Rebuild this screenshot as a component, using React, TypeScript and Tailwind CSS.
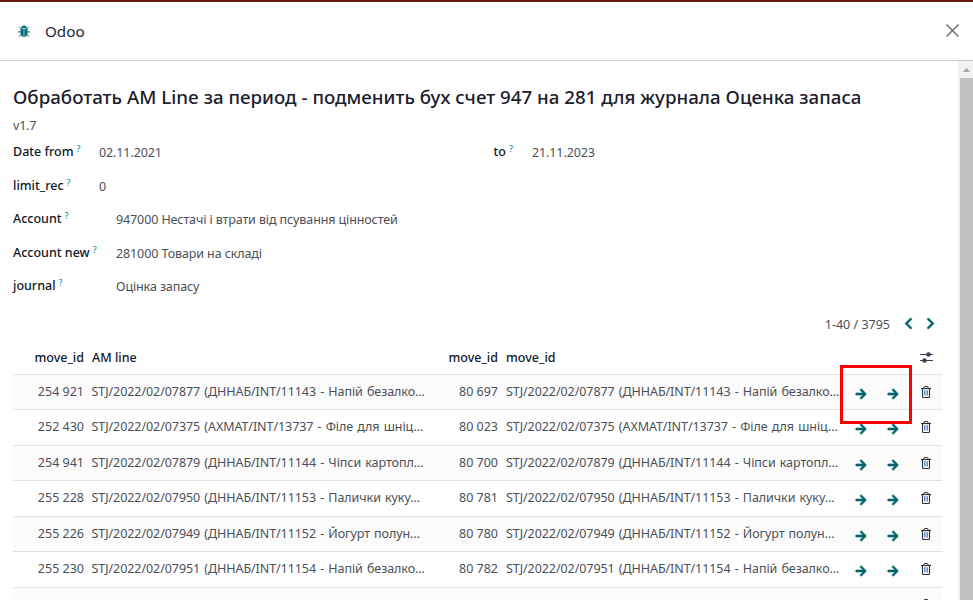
import { FaArrowRight, FaChevronLeft, FaChevronRight } from "react-icons/fa";

type Line = { id: string; line: string; move: string };

const lines: Line[] = [
  { id: "254 921", line: "STJ/2022/02/07877 (ДННАБ/INT/11143 - Напій безалко...", move: "80 697" },
  { id: "252 430", line: "STJ/2022/02/07375 (АХМАТ/INT/13737 - Філе для шніц...", move: "80 023" },
  { id: "254 941", line: "STJ/2022/02/07879 (ДННАБ/INT/11144 - Чіпси картопл...", move: "80 700" },
  { id: "255 228", line: "STJ/2022/02/07950 (ДННАБ/INT/11153 - Палички куку...", move: "80 781" },
  { id: "255 226", line: "STJ/2022/02/07949 (ДННАБ/INT/11152 - Йогурт полун...", move: "80 780" },
  { id: "255 230", line: "STJ/2022/02/07951 (ДННАБ/INT/11154 - Напій безалко...", move: "80 782" },
];

const rowHeights = ["h-[35px]", "h-[36px]"];

function BugIcon() {
  return (
    <svg width="12" height="13" viewBox="0 0 12 13" className="text-[#017075]">
      <path d="M3.200 3a2.800 2.600 0 0 1 5.600 0z" fill="currentColor" />
      <path d="M2.500 3.500h3.200V11.900C3.800 11.700 2.500 10.400 2.500 8zM6.300 3.500H9.500V8c0 2.400-1.300 3.700-3.200 3.900z" fill="currentColor" />
      <path d="M1.200 2 3.300 4M10.800 2 8.700 4M0 6.900h3M12 6.900H9M1.200 11.600 3.300 9.300M10.800 11.600 8.700 9.300" stroke="currentColor" strokeWidth="1" fill="none" />
    </svg>
  );
}

function TrashIcon() {
  return (
    <svg width="10" height="12" viewBox="0 0 10 12" fill="none" stroke="#2b303c">
      <path d="M0 2.500h10" strokeWidth="1.200" />
      <path d="M3 2.500V1.200Q3 .5 3.700.5h2.600Q7 .5 7 1.200v1.300" />
      <path d="M1.500 2.500v7.800q0 1.200 1 1.200h5q1 0 1-1.200V2.500" strokeWidth="1.100" />
      <path d="M3.500 4.200v5.300M5 4.200v5.300M6.500 4.200v5.300" strokeWidth="0.9" stroke="#557eae" />
    </svg>
  );
}

function AdjustIcon() {
  return (
    <svg width="13" height="11" viewBox="0 0 13 11" fill="#374151">
      <path d="M0 2h13v1H0zM0 8h13v1H0z" />
      <circle cx="8.500" cy="2.500" r="2.300" />
      <circle cx="4.500" cy="8.500" r="2.300" />
    </svg>
  );
}

function Label({ children }: { children: string }) {
  return (
    <span className="flex shrink-0 font-medium text-[#111827]">
      {children}
      <sup className="top-0 -mt-px ml-[3px] text-[9px] font-normal leading-[13px] text-[#017e9a]">?</sup>
    </span>
  );
}

function Field({ label, value, wide }: { label: string; value: string; wide?: boolean }) {
  return (
    <div className="flex h-[33.6px] items-start">
      <div className={wide ? "w-[103px]" : "w-[86px]"}>
        <Label>{label}</Label>
      </div>
      <span className="pt-px tracking-[-0.11px]">{value}</span>
    </div>
  );
}

function ScrollBar() {
  return (
    <div className="flex w-[15px] shrink-0 flex-col items-end bg-[#f1f1f1]">
      <div className="flex h-[17px] w-full items-center justify-center pl-0.5">
        <svg width="7" height="4" viewBox="0 0 7 4" fill="#a3a3a3"><path d="M0 4 3.500 0 7 4z" /></svg>
      </div>
      <div className="w-[13px] flex-1 bg-[#c1c1c1]" />
    </div>
  );
}

function Arrow() {
  return <FaArrowRight className="mt-1 shrink-0 text-[#01666b]" size={12} stroke="currentColor" strokeWidth={30} />;
}

export default function App() {
  return (
    <div className="relative flex h-[600px] w-[973px] flex-col overflow-hidden bg-white font-['Noto_Sans',sans-serif] text-[12.5px] leading-[18px] text-[#4b5058]">
      <div className="h-0.5 shrink-0 bg-[#641c10]" />
      <header className="flex h-[59px] shrink-0 items-center border-b border-[#c9ccd2] pr-[14px] pl-[18px]">
        <BugIcon />
        <h4 className="ml-[15px] text-[15.2px] text-[#1f2937]">Odoo</h4>
        <svg width="13" height="13" viewBox="0 0 13 13" className="-mt-px ml-auto" stroke="#707070" strokeWidth="1.500"><path d="m.5.5 12 12M12.500.5l-12 12" /></svg>
      </header>
      <div className="flex min-h-0 flex-1">
        <main className="flex min-w-0 flex-1 flex-col pr-4 pl-[13px]">
          <h2 className="mt-[22px] shrink-0 text-[18.7px] font-medium leading-[28px] tracking-[0.02px] whitespace-nowrap text-[#1a202c]">
            Обработать AM Line за период - подменить бух счет 947 на 281 для журнала Оценка запаса
          </h2>
          <p className="mt-[6px] shrink-0 tracking-[-0.2px]">v1.7</p>
          <div className="mt-2 flex shrink-0">
            <div className="w-[480.500px]">
              <Field label="Date from" value="02.11.2021" />
              <Field label="limit_rec" value="0" />
              <Field label="Account" value="947000 Нестачі і втрати від псування цінностей" wide />
              <Field label="Account new" value="281000 Товари на складі" wide />
              <Field label="journal" value="Оцінка запасу" wide />
            </div>
            <div className="flex h-[33px]">
              <div className="w-[38.500px]"><Label>to</Label></div>
              <span className="pt-px tracking-[-0.11px]">21.11.2023</span>
            </div>
          </div>
          <div className="mb-1 flex h-[25px] shrink-0 items-center justify-end pt-[3px] pr-[5px]">
            <span className="mr-[12px]">1-40 / 3795</span>
            <FaChevronLeft className="-mt-[3px] mr-[9px] text-[#01666b]" size={13} stroke="currentColor" strokeWidth={20} />
            <FaChevronRight className="-mt-[3px] text-[#01666b]" size={13} stroke="currentColor" strokeWidth={20} />
          </div>
          <div className="flex h-[35px] shrink-0 items-center border-b border-[#dee2e6] pt-0.5 font-medium text-[#111827]">
            <span className="w-[71px] text-right">move_id</span>
            <span className="ml-2 w-[340px]">AM line</span>
            <span className="w-[66px] text-right">move_id</span>
            <span className="ml-2 flex-1">move_id</span>
            <span className="mr-[9px]"><AdjustIcon /></span>
          </div>
          {lines.map((l, i) => (
            <div key={l.id} className={`flex shrink-0 items-center border-b border-[#dee2e6] ${rowHeights[i % 2]} ${i % 2 ? "bg-white" : "bg-[#fbfbfb]"}`}>
              <span className="w-[71px] text-right">{l.id}</span>
              <span className="ml-[7.500px] w-[340.500px] tracking-[-0.07px] whitespace-nowrap [word-spacing:1px]">{l.line}</span>
              <span className="w-[66px] text-right">{l.move}</span>
              <span className="ml-2 w-[348.500px] tracking-[-0.07px] whitespace-nowrap [word-spacing:1px]">{l.line}</span>
              <Arrow />
              <span className="w-5 shrink-0" />
              <Arrow />
              <span className="mr-[11px] ml-auto"><TrashIcon /></span>
            </div>
          ))}
          <div className="flex h-[35px] shrink-0 items-center justify-end bg-[#fbfbfb] pr-[11px]"><TrashIcon /></div>
        </main>
        <ScrollBar />
      </div>
      <div className="absolute top-[365px] left-[840px] h-[59px] w-[72px] border-[3px] border-[#fe0000]" />
    </div>
  );
}
